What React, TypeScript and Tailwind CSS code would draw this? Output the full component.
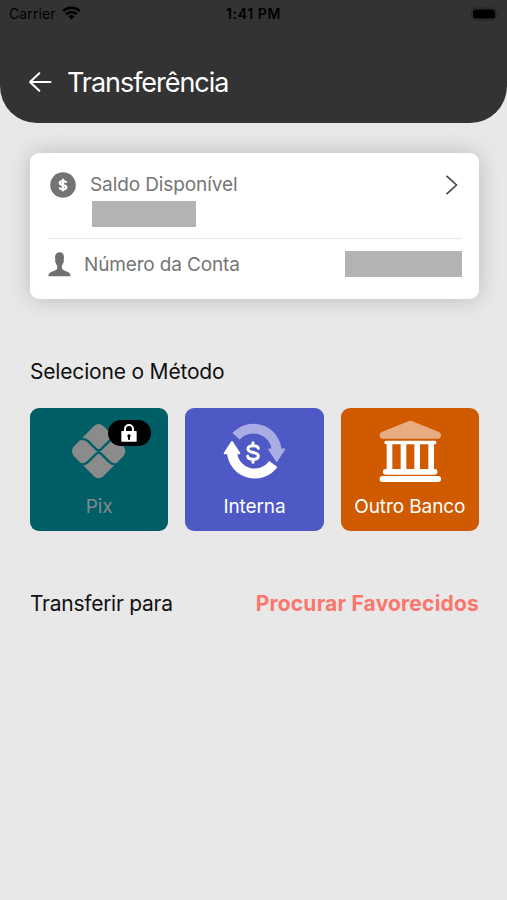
import type { ReactNode } from "react";

const DollarIcon = () => (
  <svg width="26" height="26" viewBox="0 0 26 26" fill="none" className="shrink-0">
    <circle cx="13" cy="13" r="12.8" fill="#737373" />
    <path
      d="M16.300 10.800C16 9.500 14.800 9.100 13 9.100c-2 0-3.200.8-3.200 2 0 2.900 6.500 1.100 6.500 4.100 0 1.300-1.300 2-3.300 2-1.900 0-3.100-.5-3.400-1.700M13 6.800v12.400"
      stroke="#fff"
      strokeWidth="2.300"
    />
  </svg>
);

const PersonIcon = () => (
  <svg width="23" height="25" viewBox="0 0 69 75" className="shrink-0" fill="#6f6f6f">
    <path d="M35 1c-9 0-14 6-14 15 0 4 .5 5 1.200 8-1.500 1.500-1 5 1.300 9 1 4 3 6.500 4 8.500v8C27 54 19 56 11 59 5 62 1.500 64 1 73h67c-.5-9-4-11-10-14-8-3-15-5-16.500-9.500v-8c1-2 3-4.500 4-8.500 2.300-4 2.800-7.500 1.300-9 .7-3 1.200-4 1.200-8C48 7 44 1 35 1Z" />
  </svg>
);

const PixIcon = () => (
  <svg width="62" height="62" viewBox="131 60 186 186" fill="none">
    <path d="M209 78q14-12 28 0l60 61q12 15 0 30l-60 60q-14 12-28 0l-60-60q-12-15 0-30Z" fill="#8b8b8b" />
    {/* gaps between the four petals */}
    <path
      d="M160 117h15c8 0 12 2 17 7l24 24q7 6 14 0l24-24c5-5 9-7 17-7h15M160 193h15c8 0 12-3 17-8l24-24q7-6 14 0l24 24c5 5 9 8 17 8h15"
      stroke="#005f66"
      strokeWidth="7"
    />
  </svg>
);

const SwapIcon = () => (
  <svg width="62" height="62" viewBox="130 60 186 186" fill="none">
    <path d="M169 109A70 69 0 0 1 291 150" stroke="#a9ade4" strokeWidth="29" />
    <path d="M268 148h46l-23 35Z" fill="#a9ade4" stroke="#a9ade4" strokeWidth="5" strokeLinejoin="round" />
    <path d="M157 158A68.500 68.500 0 0 0 281 192" stroke="#fff" strokeWidth="30" />
    <path d="M135 160l22-34 22 34Z" fill="#fff" stroke="#fff" strokeWidth="6" strokeLinejoin="round" />
    <path
      d="M236 145c-1-6-7-8-16-8-10 0-15 4-15 10 0 15 31 6 31 21 0 7-6 10-16 10-9 0-15-2-16-9M220 128v8M220 178v9"
      stroke="#fff"
      strokeWidth="9"
      strokeLinecap="round"
    />
  </svg>
);

const BankIcon = () => (
  <svg width="62" height="62" viewBox="131 60 186 186" fill="#fff">
    <path d="M219 64q6-3 12 0l80 32q6 3 6 9 0 11-9 11H142q-9 0-9-11 0-6 6-9Z" fill="#e7ac82" />
    <rect x="147" y="122" width="156" height="11" rx="5" />
    <path d="M154 130h17v78h-17zM196 130h17v78h-17zM237 130h17v78h-17zM279 130h17v78h-17z" />
    <rect x="143" y="207" width="163" height="17" rx="7" />
    <rect x="133" y="228" width="184" height="18" rx="8" />
  </svg>
);

const LockIcon = () => (
  <svg width="18" height="19" viewBox="0 0 54 57" fill="none">
    <path d="M15 26v-8a12 12 0 0 1 24 0v8" stroke="#fff" strokeWidth="6" />
    <rect x="4" y="24" width="46" height="32" rx="2" fill="#fff" />
    <path d="M27 34a5 5 0 0 1 3 9v7h-6v-7a5 5 0 0 1 3-9Z" fill="#000" />
  </svg>
);

type Method = {
  name: string;
  icon: ReactNode;
  tile: string;
  label: string;
  locked?: boolean;
};

const methods: Method[] = [
  {
    name: "Pix",
    icon: <PixIcon />,
    tile: "bg-[#005f66]",
    label: "text-[#808b8c]",
    locked: true,
  },
  { name: "Interna", icon: <SwapIcon />, tile: "bg-[#4e59c5]", label: "text-white" },
  { name: "Outro Banco", icon: <BankIcon />, tile: "bg-[#cf5a00]", label: "text-white" },
];

export default function App() {
  return (
    <div className="min-h-screen bg-[#e8e8e8] font-[Inter,sans-serif] text-[#111]">
      <header className="h-[123px] rounded-b-[37px] bg-[#333333]">
        <div className="flex h-[27px] items-center justify-between px-[9px] text-black">
          <div className="flex w-24 items-center gap-[6px] text-[14px] tracking-[0.1px]">
            Carrier
            <svg width="19" height="14" viewBox="0 0 19 14" fill="none" stroke="#000" strokeWidth="2.700" className="-mt-0.5">
              <path d="M1.200 5.100a12 12 0 0 1 16.600 0M4.200 8.200a7.600 7.600 0 0 1 10.600 0" />
              <path d="M9.500 13.600 6.500 10.500a4.300 4.300 0 0 1 6 0Z" fill="#000" stroke="none" />
            </svg>
          </div>
          <span className="text-[14px] font-semibold tracking-[0.6px]">1:41 PM</span>
          <div className="flex w-24 justify-end">
            <svg width="28" height="14" viewBox="0 0 28 14" className="-mr-[1px]">
              <rect x=".6" y="1" width="24" height="12" rx="3.500" fill="none" stroke="#242424" />
              <rect x="2" y="2.500" width="22" height="9" rx="2.500" fill="#000" />
              <path d="M26.300 5v4q1.500-2 0-4Z" fill="#1c1c1c" />
            </svg>
          </div>
        </div>
        <div className="flex items-center gap-[15px] pt-[37px] pl-[28px] text-white">
          <svg width="24" height="20" viewBox="0 0 24 20" fill="none" stroke="#fff" strokeWidth="2" strokeLinecap="round" strokeLinejoin="round" className="mb-0.5">
            <path d="M11.300 1.200 2 10l9.300 8.800M2 10h20.500" />
          </svg>
          <h1 className="pt-px text-[27px] leading-9 tracking-[-1.05px]">Transferência</h1>
        </div>
      </header>

      <main className="pt-[29.500px] pr-[28px] pl-[30px]">
        <section className="h-[146.500px] rounded-[9px] bg-white pr-[17px] pl-[18px] text-[19px] text-[#757575] shadow-[0_0_22px_rgba(0,0,0,0.2)]">
          <div className="flex h-[86.500px] items-start border-b border-[#e9e9e9] pt-[19.500px] pl-[1.500px]">
            <DollarIcon />
            <div className="ml-[14.500px] leading-[26px]">
              <p className="tracking-[-0.1px]">Saldo Disponível</p>
              <div className="mt-[3px] ml-[2px] h-[26px] w-[104px] bg-[#b3b3b3]" />
            </div>
            <svg width="13" height="20" viewBox="0 0 13 20" fill="none" stroke="#444" strokeWidth="1.600" className="mt-[3px] mr-[4px] ml-auto">
              <path d="M1.500.8 11.500 10l-10 9.200" />
            </svg>
          </div>
          <div className="flex items-center pt-[12.500px]">
            <PersonIcon />
            <p className="ml-[13px] leading-[26px] tracking-[-0.15px]">Número da Conta</p>
            <div className="-mt-px mb-px ml-auto h-[26px] w-[117px] bg-[#b3b3b3]" />
          </div>
        </section>

        <h2 className="mt-[59px] text-[21px] leading-[28px] tracking-[-0.18px]">Selecione o Método</h2>
        <div className="mt-[22px] grid grid-cols-3 gap-[17px]">
          {methods.map((method) => (
            <button
              key={method.name}
              type="button"
              className={`relative flex h-[122.500px] flex-col items-center rounded-[9px] pt-[12px] ${method.tile}`}
            >
              {method.icon}
              <span className={`mt-[11px] text-[19px] leading-[28px] tracking-[-0.1px] whitespace-nowrap ${method.label}`}>
                {method.name}
              </span>
              {method.locked ? (
                <span className="absolute top-[11.500px] left-[77.500px] flex h-[26px] w-[43px] items-center justify-center rounded-full bg-black">
                  <LockIcon />
                </span>
              ) : null}
            </button>
          ))}
        </div>

        <div className="mt-[59px] flex items-center justify-between text-[21px] leading-[28px]">
          <h2 className="tracking-[-0.26px]">Transferir para</h2>
          <a href="#favorecidos" className="font-bold tracking-[0.2px] text-[#fb766d]">
            Procurar Favorecidos
          </a>
        </div>
      </main>
    </div>
  );
}
